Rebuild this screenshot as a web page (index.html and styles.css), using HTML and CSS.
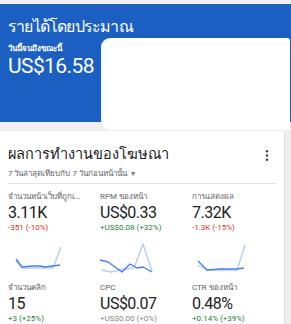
FILE: index.html
```html
<!DOCTYPE html>
<html lang="th">
<head>
<meta charset="utf-8">
<link rel="stylesheet" href="styles.css">
</head>
<body>
<section class="earnings">
  <h1 class="earnings-title">รายได้โดยประมาณ</h1>
  <div class="earnings-label">วันนี้จนถึงขณะนี้</div>
  <div class="earnings-value">US$16.58</div>
  <div class="redact"></div>
</section>

<section class="card">
  <div class="card-head">
    <h2 class="card-title">ผลการทำงานของโฆษณา</h2>
    <svg class="kebab" width="4" height="11" viewBox="0 0 4 11"><circle cx="2" cy="1.3" r="1.2"/><circle cx="2" cy="5.5" r="1.2"/><circle cx="2" cy="9.7" r="1.2"/></svg>
  </div>
  <div class="card-sub">7 วันล่าสุดเทียบกับ 7 วันก่อนหน้านั้น <span class="caret">▾</span></div>
  <div class="divider"></div>
  <div class="metrics">
    <div class="metric">
      <div class="m-label">จำนวนหน้าเว็บที่ถูกเปิดดู</div>
      <div class="m-value">3.11K</div>
      <div class="m-delta neg">-351 (-10%)</div>
      <svg class="spark" width="60" height="30" viewBox="0 0 60 30">
        <polyline class="prev" points="8,18 14,25 25,25 37,25 45,25 53,4"/>
        <polyline class="cur" points="8,16 14,24 25,23 32,23 37,24 45,23 52,22"/>
      </svg>
    </div>
    <div class="metric">
      <div class="m-label">RPM ของหน้า</div>
      <div class="m-value">US$0.33</div>
      <div class="m-delta pos">+US$0.08 (+32%)</div>
      <svg class="spark" width="60" height="30" viewBox="0 0 60 30">
        <polyline class="prev" points="2,27 11,29 24,26 34,25 43,1 52,28"/>
        <polyline class="cur" points="0,17 8,19 22,29 30,21 37,25 43,24 52,29"/>
      </svg>
    </div>
    <div class="metric">
      <div class="m-label">การแสดงผล</div>
      <div class="m-value">7.32K</div>
      <div class="m-delta neg">-1.3K (-15%)</div>
      <svg class="spark" width="60" height="30" viewBox="0 0 60 30">
        <polyline class="prev" points="6,22 15,27 30,27 45,27 53,2"/>
        <polyline class="cur" points="6,18 15,27 28,26 38,26 45,26 52,25"/>
      </svg>
    </div>
    <div class="metric">
      <div class="m-label">จำนวนคลิก</div>
      <div class="m-value">15</div>
      <div class="m-delta pos">+3 (+25%)</div>
    </div>
    <div class="metric">
      <div class="m-label">CPC</div>
      <div class="m-value">US$0.07</div>
      <div class="m-delta neutral">+US$0.00 (+0%)</div>
    </div>
    <div class="metric">
      <div class="m-label">CTR ของหน้า</div>
      <div class="m-value">0.48%</div>
      <div class="m-delta pos">+0.14% (+39%)</div>
    </div>
  </div>
</section>
</body>
</html>
```

FILE: styles.css
```css
html, body {
  margin: 0;
  padding: 0;
}
body {
  background: #efefef;
  font-family: Roboto, "Noto Sans", "DejaVu Sans", sans-serif;
  width: 291px;
  height: 324px;
  overflow: hidden;
  padding-top: 4px;
  box-sizing: border-box;
}
.earnings {
  position: relative;
  background: #1b5fc2;
  color: #fff;
  height: 118px;
  padding: 12px 8px 0;
  box-sizing: border-box;
}
.earnings-title {
  margin: 0;
  font-size: 16px;
  font-weight: 500;
  line-height: 22px;
  letter-spacing: -0.8px;
}
.earnings-label {
  margin-top: 5px;
  font-size: 8px;
  font-weight: 700;
  line-height: 11px;
}
.earnings-value {
  font-size: 21px;
  line-height: 24px;
  letter-spacing: -0.6px;
}
.redact {
  position: absolute;
  left: 101px;
  top: 34px;
  width: 189px;
  height: 92px;
  background: #fff;
  border-radius: 9px 3px 4px 10px;
}
.card {
  margin-top: 9px;
  width: 284px;
  height: 200px;
  background: #fff;
  box-shadow: 0 1px 2px rgba(0,0,0,0.18);
  padding-top: 14px;
  box-sizing: border-box;
}
.card-head {
  display: flex;
  align-items: center;
  justify-content: space-between;
  padding: 0 15px 0 8px;
}
.card-title {
  margin: 0;
  font-size: 14.5px;
  font-weight: 400;
  line-height: 20px;
  color: #212121;
}
.kebab {
  fill: #3c4043;
}
.card-sub {
  padding: 0 8px;
  margin-top: 2px;
  font-size: 8px;
  line-height: 13px;
  color: #5f6368;
}
.caret {
  font-size: 8px;
  color: #777;
  margin-left: 2px;
}
.divider {
  margin: 3px 8px 0;
  height: 1px;
  background: #e3e3e3;
}
.metrics {
  display: grid;
  grid-template-columns: 92px 92px 1fr;
  row-gap: 9px;
  padding: 7px 8px 0;
}
.metric {
  min-width: 0;
}
.m-label {
  font-size: 8px;
  line-height: 12px;
  color: #5f6368;
  white-space: nowrap;
  overflow: hidden;
  text-overflow: ellipsis;
  padding-right: 15px;
}
.m-value {
  margin-top: 2px;
  font-size: 16px;
  line-height: 16px;
  letter-spacing: -0.5px;
  color: #202124;
}
.m-delta {
  margin-top: 2px;
  font-size: 8px;
  line-height: 10px;
}
.neg { color: #d93025; }
.pos { color: #188038; }
.neutral { color: #7d8b82; }
.spark {
  display: block;
  margin-top: 10px;
}
.spark polyline {
  fill: none;
  stroke-width: 1.4;
  stroke-linejoin: round;
}
.spark .prev { stroke: #b5cdf7; }
.spark .cur { stroke: #4a7ff0; }
```
